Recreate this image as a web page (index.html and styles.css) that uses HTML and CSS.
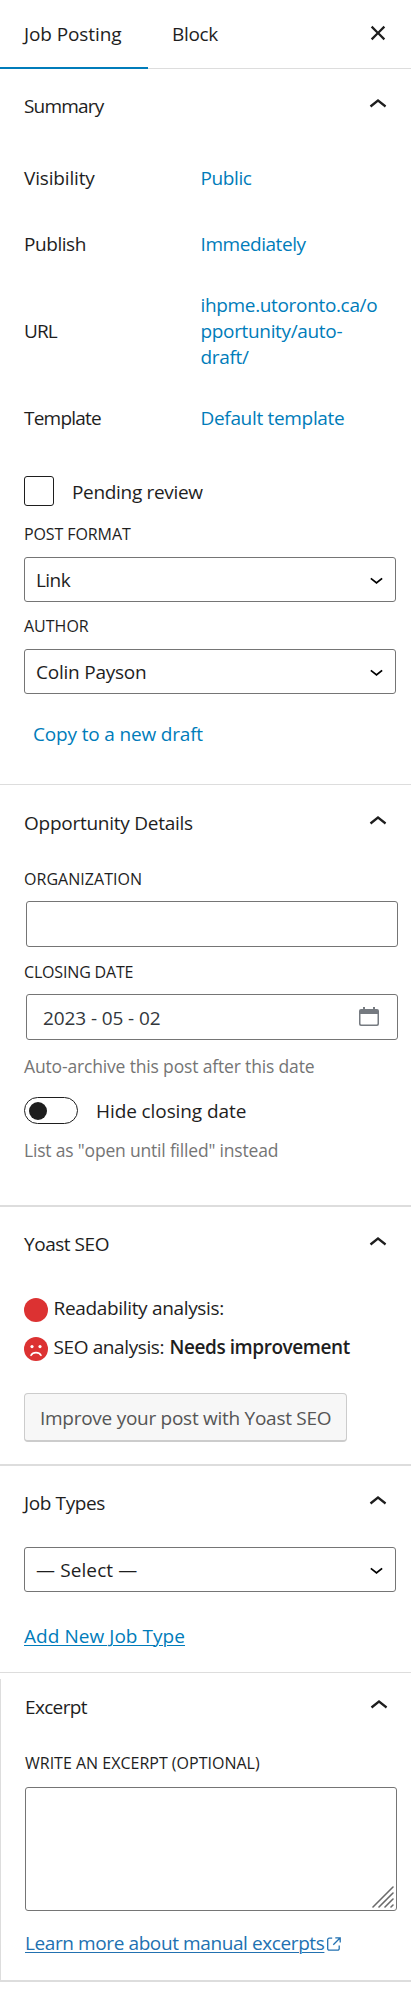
FILE: index.html
```
<!DOCTYPE html>
<html lang="en">
<head>
<meta charset="utf-8">
<title>Job Posting settings</title>
<link rel="stylesheet" href="styles.css">
</head>
<body>
<svg class="defs" width="0" height="0">
  <symbol id="up" viewBox="0 0 24 24"><path d="M6.5 12.4L12 8l5.5 4.4-.9 1.2L12 10l-4.5 3.6-1-1.2z"/></symbol>
  <symbol id="down" viewBox="0 0 24 24"><path d="M17.5 11.6L12 16l-5.5-4.4.9-1.2L12 14l4.5-3.6 1 1.2z"/></symbol>
</svg>
<aside class="sidebar">
  <header class="tabs">
    <div class="tab active"><span class="t-job">Job Posting</span></div>
    <div class="tab"><span class="t-block">Block</span></div>
    <svg class="close" viewBox="0 0 24 24"><path d="M12 13.06l3.712 3.713 1.061-1.06L13.061 12l3.712-3.712-1.06-1.06L12 10.938 8.288 7.227l-1.061 1.06L10.939 12l-3.712 3.712 1.06 1.061L12 13.061z"/></svg>
  </header>

  <section class="panel summary">
    <h2 class="title"><span class="t-summary">Summary</span><svg class="chev"><use href="#up"/></svg></h2>
    <div class="row first"><span class="t-vis">Visibility</span><a class="t-public">Public</a></div>
    <div class="row second"><span class="t-publish">Publish</span><a class="t-imm">Immediately</a></div>
    <div class="row url"><span class="t-url">URL</span><a class="t-link">ihpme.utoronto.ca/o<br>pportunity/auto-<br>draft/</a></div>
    <div class="row template"><span class="t-template">Template</span><a class="t-default">Default template</a></div>
    <label class="pending"><span class="checkbox"></span><span class="t-pending">Pending review</span></label>
    <div class="label l-format">POST FORMAT</div>
    <div class="select"><span class="t-lnk">Link</span><svg><use href="#down"/></svg></div>
    <div class="label l-author">AUTHOR</div>
    <div class="select"><span class="t-colin">Colin Payson</span><svg><use href="#down"/></svg></div>
    <a class="copy">Copy to a new draft</a>
  </section>

  <section class="panel details">
    <h2 class="title"><span class="t-opp">Opportunity Details</span><svg class="chev"><use href="#up"/></svg></h2>
    <div class="label l-org">ORGANIZATION</div>
    <div class="input"></div>
    <div class="label l-closing">CLOSING DATE</div>
    <div class="input date"><span>2023 - 05 - 02</span>
      <svg viewBox="0 0 20 20"><path d="M0 4a2 2 0 0 1 2-2h2V0h2v2h8V0h2v2h2a2 2 0 0 1 2 2v13a2 2 0 0 1-2 2H2a2 2 0 0 1-2-2zM1.5 7v9.5a1 1 0 0 0 1 1h15a1 1 0 0 0 1-1V7z" fill-rule="evenodd"/></svg>
    </div>
    <p class="help h-auto">Auto-archive this post after this date</p>
    <label class="hide"><span class="toggle"></span><span class="t-hide">Hide closing date</span></label>
    <p class="help h-list">List as "open until filled" instead</p>
  </section>

  <section class="panel yoast">
    <h2 class="title"><span class="t-yoast">Yoast SEO</span><svg class="chev"><use href="#up"/></svg></h2>
    <div class="score readability"><svg viewBox="0 0 24 24"><circle cx="12" cy="12" r="12"/></svg><span class="t-read">Readability analysis:</span></div>
    <div class="score seo"><svg viewBox="0 0 24 24"><circle cx="12" cy="12" r="12"/><g class="face"><circle cx="8" cy="9.6" r="1.6"/><circle cx="16" cy="9.6" r="1.6"/><path d="M7 18.3c2-3.6 8-3.6 10 0"/></g></svg><span class="t-seo">SEO analysis:</span><strong>Needs improvement</strong></div>
    <button class="improve">Improve your post with Yoast SEO</button>
  </section>

  <section class="panel types">
    <h2 class="title"><span class="t-types">Job Types</span><svg class="chev"><use href="#up"/></svg></h2>
    <div class="select"><span class="t-select">— Select —</span><svg><use href="#down"/></svg></div>
    <a class="add">Add New Job Type</a>
  </section>

  <section class="excerpt">
    <h2 class="title"><span class="t-excerpt">Excerpt</span><svg class="chev"><use href="#up"/></svg></h2>
    <div class="label l-write">WRITE AN EXCERPT (OPTIONAL)</div>
    <div class="textarea"><svg viewBox="0 0 22 22"><path d="M1 21L21 1M7 21L21 7M13 21l8-8M19 21l2-2"/></svg></div>
    <div class="learn"><a>Learn more about manual excerpts</a><svg viewBox="0 0 14 14"><path d="M5.2 1.2H2.2a1.5 1.5 0 0 0-1.5 1.5v9a1.5 1.5 0 0 0 1.5 1.5h8.5a1.5 1.5 0 0 0 1.5-1.5V8.5M8.3.8H13.2V5.5M13 1L6.3 7.7"/></svg></div>
  </section>
</aside>
</body>
</html>
```
FILE: styles.css
```
* { box-sizing: border-box; }
body {
  margin: 0;
  background: #fff;
  color: #1e1e1e;
  font: 19px/26px "Open Sans", "Noto Sans", sans-serif;
}
.defs { position: absolute; }
.sidebar { width: 411px; }
a { color: #007cba; }
span, a, strong { white-space: nowrap; }

.tabs {
  display: flex;
  height: 69px;
  border-bottom: 1px solid #ddd;
}
.tab { height: 69px; padding: 21px 24px 0; }
.tab.active { width: 148px; border-bottom: 2px solid #007cba; }
.close { width: 36px; height: 36px; margin: 15px 15px 0 auto; fill: #1e1e1e; }

.panel { padding: 24px 15px 0 24px; border-bottom: 2px solid #ddd; }
.summary { height: 716px; border-bottom-width: 1px; }
.details { height: 422px; padding-top: 25px; }
.yoast { height: 259px; }
.types { height: 207px; border-bottom-width: 1px; }
.excerpt {
  height: 303px;
  margin-top: 6px;
  padding: 15px 14px 0 24px;
  border-left: 1px solid #ddd;
  border-bottom: 2px solid #ddd;
}

.title {
  display: flex;
  justify-content: space-between;
  height: 26px;
  margin: 0;
  font-size: 19px;
  font-weight: 400;
}
.chev { width: 36px; height: 36px; margin-top: -6px; fill: #1e1e1e; }

.row { display: grid; grid-template-columns: 176.5px 1fr; align-items: center; }
.row.first { margin-top: 46px; }
.row.second { margin-top: 40px; }
.row.url { margin-top: 35px; }
.row.template { margin-top: 35px; }

.pending { display: flex; gap: 18px; height: 30px; margin-top: 45px; }
.pending .t-pending { margin-top: 3px; }
.checkbox { width: 30px; height: 30px; border: 1px solid #1e1e1e; border-radius: 3px; }

.label { height: 20px; font-size: 16px; line-height: 20px; white-space: nowrap; }
.l-format { margin: 18px 0 13px; letter-spacing: -.1px; }
.l-author { margin: 14px 0 13px; letter-spacing: 0; }
.l-org { margin: 33px 0 12px; letter-spacing: .04px; }
.l-closing { margin: 15px 0 12px; letter-spacing: -.17px; }
.l-write { margin: 33px 0 14px; letter-spacing: 0; }

.select, .input, .textarea {
  width: 372px;
  border: 1px solid #757575;
  border-radius: 3px;
}
.select {
  display: flex;
  justify-content: space-between;
  height: 45px;
  padding: 9px 5px 0 11px;
}
.select svg { width: 27px; height: 27px; margin-top: -1px; }
.copy { display: block; margin: 27px 0 0 9px; letter-spacing: -.17px; }

.input { height: 46px; margin-left: 2px; }
.date {
  display: flex;
  justify-content: space-between;
  padding: 10px 18px 0 16px;
  color: #32373c;
  letter-spacing: -.1px;
}
.date svg { width: 20px; height: 20px; margin-top: 2px; fill: #757a80; }
.help { height: 24px; color: #757575; font-size: 17.5px; line-height: 24px; white-space: nowrap; }
.h-auto { margin: 14px 0 0; letter-spacing: -.16px; }
.h-list { margin: 14px 0 0; letter-spacing: -.19px; }
.hide { display: flex; gap: 18px; height: 27px; margin-top: 19px; }
.hide .t-hide { margin-top: 1px; }
.toggle { width: 54px; height: 27px; padding: 4px; border: 1px solid #1e1e1e; border-radius: 14px; }
.toggle::before { content: ""; display: block; width: 18px; height: 18px; border-radius: 50%; background: #1e1e1e; }

.score { display: flex; height: 26px; }
.score svg { width: 24px; height: 24px; margin: 3px 5.5px 0 0; fill: #dc3232; }
.score .face { fill: #fff; }
.score .face path { fill: none; stroke: #fff; stroke-width: 1.6; stroke-linecap: round; }
.score strong { margin-left: 5.5px; font-weight: 600; letter-spacing: -.44px; }
.readability { margin-top: 38px; }
.seo { margin-top: 13px; }
.improve {
  display: block;
  width: 323px;
  height: 49px;
  margin-top: 33px;
  padding: 2px 0 0 15px;
  border: 1px solid #ccc;
  border-bottom-width: 2px;
  border-radius: 4px;
  background: #f7f7f7;
  color: #555;
  font: inherit;
  letter-spacing: -.27px;
  text-align: left;
}

.types .select { margin-top: 31px; }
.add { display: inline-block; margin-top: 31px; letter-spacing: .05px; text-decoration: underline; text-decoration-thickness: 1px; text-underline-offset: 2px; text-decoration-skip-ink: auto; }
.textarea { display: flex; height: 124px; padding: 0 2px 2px; justify-content: flex-end; align-items: flex-end; }
.textarea svg { width: 22px; height: 22px; stroke: #6b6b6b; stroke-width: 1.6; stroke-linecap: round; }
.learn { display: flex; margin-top: 19px; }
.learn a { color: #2271b1; letter-spacing: -.4px; text-decoration: underline; text-decoration-thickness: 1px; text-underline-offset: 2px; }
.learn svg { width: 14px; height: 14px; margin: 7px 0 0 3px; fill: none; stroke: #2271b1; stroke-width: 1.3; }

/* Optical tracking for individual strings */
.t-job { letter-spacing: -.1px; }
.t-block { letter-spacing: -.33px; }
.t-summary { letter-spacing: -.81px; }
.t-vis { letter-spacing: -.16px; }
.t-publish { letter-spacing: -.44px; }
.t-url { letter-spacing: -.94px; }
.t-template { letter-spacing: -.78px; }
.t-public { letter-spacing: -.4px; }
.t-imm { letter-spacing: -.43px; }
.t-link { letter-spacing: -.34px; }
.t-default { letter-spacing: -.32px; }
.t-pending { letter-spacing: -.32px; }
.t-lnk { letter-spacing: -.56px; }
.t-colin { letter-spacing: -.23px; }
.t-opp { letter-spacing: -.26px; }
.t-hide { letter-spacing: -.09px; }
.t-yoast { letter-spacing: -.46px; }
.t-read { letter-spacing: -.33px; }
.t-seo { letter-spacing: -.39px; }
.t-types { letter-spacing: -.38px; }
.t-select { letter-spacing: .11px; }
.t-excerpt { letter-spacing: -.66px; }
```
